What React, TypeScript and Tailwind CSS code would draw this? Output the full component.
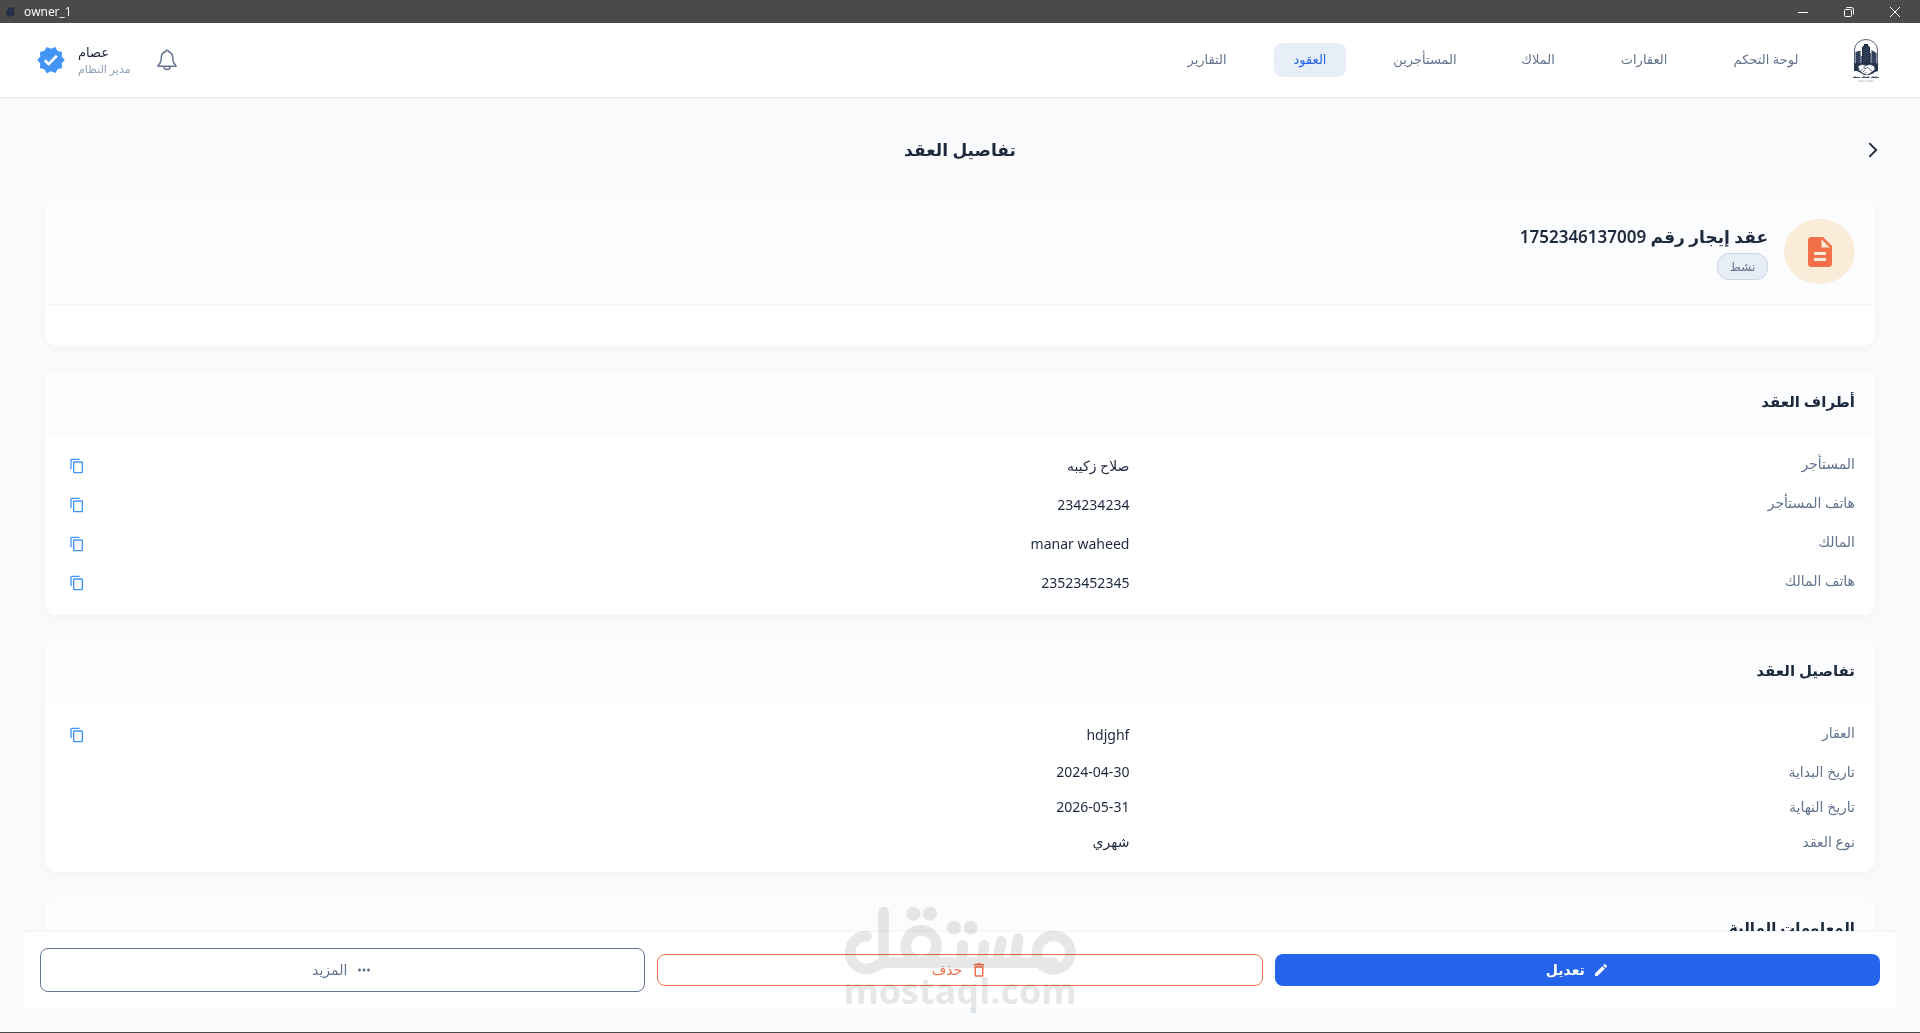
import React from "react";
import {
  MdContentCopy,
  MdDeleteOutline,
  MdDescription,
  MdEdit,
  MdMoreHoriz,
  MdVerified,
  MdArrowForwardIos,
} from "react-icons/md";

type NavItem = { label: string; width: string; active?: boolean };
type Row = { label: string; value: string; copy?: boolean };

const NAV: NavItem[] = [
  { label: "لوحة التحكم", width: "w-[100px]" },
  { label: "العقارات", width: "w-20" },
  { label: "الملاك", width: "w-[68px]" },
  { label: "المستأجرين", width: "w-[94px]" },
  { label: "العقود", width: "w-[72px]", active: true },
  { label: "التقارير", width: "w-[70px]" },
];

const PARTIES: Row[] = [
  { label: "المستأجر", value: "صلاح زكيبه", copy: true },
  { label: "هاتف المستأجر", value: "234234234", copy: true },
  { label: "المالك", value: "manar waheed", copy: true },
  { label: "هاتف المالك", value: "23523452345", copy: true },
];

const DETAILS: Row[] = [
  { label: "العقار", value: "hdjghf", copy: true },
  { label: "تاريخ البداية", value: "2024-04-30" },
  { label: "تاريخ النهاية", value: "2026-05-31" },
  { label: "نوع العقد", value: "شهري" },
];

function AppMark() {
  return (
    <svg viewBox="0 0 10 12" className="h-3 w-[10px]" aria-hidden="true">
      <path d="M1 4l1 0V1l1 1 1-1 1 1 1-1 1 1 1-1v3l1 0-1 2 1 2-1 2-1-1-1 2-1-1-2 1-1-2-1 1-1-3 1-2z" fill="#1f2a44" />
      <path d="M3 6h1M5 3v2M7 6h1M4 9h2" stroke="#4c5a78" strokeWidth=".7" />
    </svg>
  );
}

function TitleBar() {
  return (
    <div dir="ltr" className="flex h-[23px] shrink-0 items-center justify-between bg-[#4c4a48] pr-0.5 text-white">
      <div className="flex items-center gap-2 pl-1.5">
        <AppMark />
        <span className="font-['Open_Sans',sans-serif] text-xs leading-4">owner_1</span>
      </div>
      <div className="flex h-full">
        <button aria-label="Minimize" className="flex w-[46px] items-center justify-center">
          <svg viewBox="0 0 10 10" className="size-[10px]" stroke="currentColor" fill="none">
            <path d="M0 5.5h10" />
          </svg>
        </button>
        <button aria-label="Restore" className="flex w-[46px] items-center justify-center">
          <svg viewBox="0 0 10 10" className="size-[10px]" stroke="currentColor" fill="none">
            <rect x=".5" y="2.5" width="7" height="7" rx="1" />
            <path d="M2.5.5H7.500a2 2 0 0 1 2 2V7.500" />
          </svg>
        </button>
        <button aria-label="Close" className="flex w-[46px] items-center justify-center">
          <svg viewBox="0 0 10 10" className="size-[10px]" stroke="currentColor" fill="none">
            <path d="M0 0l10 10M10 0L0 10" />
          </svg>
        </button>
      </div>
    </div>
  );
}

function Logo() {
  return (
    <svg viewBox="0 0 28 44" className="h-11 w-7" role="img" aria-label="مكتب عصام القت">
      <path d="M2.500 26V12a11.500 10.500 0 0 1 23 0v14" fill="none" stroke="#55627a" strokeWidth="1" />
      <path d="M10 9l2-1.500V6h4v1.500L18 9v18h-8z" fill="#1d2a44" />
      <path d="M3.500 14l5-1.500V26h-5zM19.500 12l5 3v11h-5z" fill="#26334d" />
      <path d="M8.500 18h1.500v8H8.500zM18 15h1.500v11H18z" fill="#5d6a82" />
      <path
        d="M12 9v16M14 8v16M16 9v16M5 15v9M7 14v11M21 14v11M23 15v9"
        stroke="#8e9ab0"
        strokeWidth=".6"
        strokeDasharray="1 1"
      />
      <path d="M2 25l4 1 4-1.500 4 1 4-1 4 1.500 4-1v8l-3 1-3 2-4 1h-4l-4-2.500-3-1.500-3 0z" fill="#26334d" />
      <path
        d="M6 28l4-1.500 4 1 4-1 4 1.500 1 3.500-5 4-3 1.500-4-1.500-4-3.500z"
        fill="#fff"
        stroke="#26334d"
        strokeWidth=".5"
      />
      <path
        d="M14 27.500l-2.500 2.500 1.500.8 2.500-1.300 4.500 3.500M9 32.500l2-1.500M11 34l2-2M13 35.500l1.500-1.500"
        fill="none"
        stroke="#26334d"
        strokeWidth=".7"
      />
      <path d="M1 39.500h7M9.500 39.500h8M19 39.500h8M3 38v1M12 37.800v1.500M16 38v2M21 38v1M24 37.800v2" stroke="#46536b" strokeWidth="1" />
      <path d="M6 43h7M14.500 43h7" stroke="#b6c0cf" strokeWidth="1" />
    </svg>
  );
}

function Header() {
  return (
    <header className="flex h-[75px] shrink-0 items-center justify-between border-b border-[#e5e8ec] bg-white pr-10 pl-9">
      <div className="flex items-center gap-9">
        <Logo />
        <nav className="flex items-center gap-8">
          {NAV.map((item) => (
            <a
              key={item.label}
              href="#"
              className={`flex h-[34px] items-center justify-center rounded-lg text-[13px] whitespace-nowrap ${item.width} ${
                item.active ? "bg-[#e8eef8] font-medium text-[#2563eb]" : "text-slate-500"
              }`}
            >
              {item.label}
            </a>
          ))}
        </nav>
      </div>
      <div dir="ltr" className="flex items-center">
        <MdVerified className="size-[30px] text-[#4294f7]" />
        <div className="ml-3 flex flex-col items-start" dir="ltr">
          <span className="text-[13px] leading-[18px] text-slate-800">عصام</span>
          <span className="text-[11px] leading-4 text-slate-400">مدير النظام</span>
        </div>
        <button aria-label="الإشعارات" className="ml-6 text-slate-500">
          <svg viewBox="0 0 24 24" className="size-6" fill="none" stroke="currentColor" strokeWidth="1.500" strokeLinejoin="round">
            <path d="M10.500 3.800a1.500 1.500 0 0 1 3 0c2.700.7 4.200 3 4.200 5.700 0 4.500 1 6.300 3.300 8v.8H3v-.8c2.300-1.700 3.300-3.500 3.300-8 0-2.700 1.500-5 4.200-5.700z" />
            <path d="M9 18.500a3 3 0 0 0 6 0" />
          </svg>
        </button>
      </div>
    </header>
  );
}

function InfoRow({ row }: { row: Row }) {
  return (
    <div
      className={`mb-2 grid grid-cols-[2fr_3fr] gap-4 text-sm ${row.copy ? "h-[31px]" : "h-[27px]"}`}
    >
      <dt className="leading-7 text-slate-500">{row.label}</dt>
      <dd className="flex items-center justify-between text-slate-800">
        <span>{row.value}</span>
        {row.copy && (
          <button aria-label={`نسخ ${row.label}`} className="p-1 text-[#4294f7]">
            <MdContentCopy className="size-4" />
          </button>
        )}
      </dd>
    </div>
  );
}

function Card({ children }: { children: React.ReactNode }) {
  return (
    <section className="shrink-0 overflow-hidden rounded-xl bg-white shadow-[0_3px_12px_rgba(15,23,42,0.03)]">
      {children}
    </section>
  );
}

function InfoCard({ title, rows }: { title: string; rows: Row[] }) {
  return (
    <Card>
      <h2 className="flex h-16 items-center border-b border-[#f5f7fa] bg-[#fbfcfe] px-5 text-[15px] font-bold text-slate-800">
        {title}
      </h2>
      <dl className="px-5 pt-4 pb-[9px]">
        {rows.map((row) => (
          <InfoRow key={row.label} row={row} />
        ))}
      </dl>
    </Card>
  );
}

function Watermark() {
  return (
    <div
      dir="ltr"
      className="pointer-events-none absolute bottom-[25px] left-1/2 flex w-[232px] -translate-x-1/2 flex-col items-center text-[#e6e7e7] mix-blend-multiply"
    >
      <svg viewBox="74 46 692 206" className="w-full" fill="none" stroke="currentColor" strokeWidth="32" strokeLinecap="round" aria-hidden="true">
        <path d="M141 136a49 49 0 1 0 0 98c27 0 32-19 56-19H699M192 64V212" />
        <circle cx="304" cy="165" r="46" />
        <circle cx="699" cy="185" r="50" />
        <path d="M428 163L424 212M492 163L485 212M543 151L532 212M593 143L584 212" />
        <g fill="currentColor" stroke="none">
          <circle cx="281" cy="69" r="21" />
          <circle cx="330" cy="69" r="21" />
          <circle cx="402" cy="111" r="21" />
          <circle cx="452" cy="111" r="21" />
        </g>
      </svg>
      <span className="font-['Open_Sans',sans-serif] text-4xl leading-8 font-bold">mostaql.com</span>
    </div>
  );
}

function ActionBar() {
  return (
    <footer className="grid shrink-0 grid-cols-3 items-center gap-3 border-t border-[#f1f3f6] bg-white p-4 text-sm">
      <button className="flex h-8 items-center justify-center gap-2 rounded-lg bg-[#2563eb] font-semibold text-white">
        <MdEdit className="size-4" />
        تعديل
      </button>
      <button className="flex h-8 items-center justify-center gap-2 rounded-lg border border-[#f1704a] font-medium text-[#f1704a]">
        <MdDeleteOutline className="size-[18px]" />
        حذف
      </button>
      <button className="flex h-11 items-center justify-center gap-2 rounded-lg border border-slate-500 font-medium text-slate-500">
        <MdMoreHoriz className="size-[18px]" />
        المزيد
      </button>
    </footer>
  );
}

export default function App() {
  return (
    <div
      dir="rtl"
      className="relative flex h-screen flex-col overflow-hidden border-b border-[#4c4a48] bg-slate-50 font-['Noto_Sans','DejaVu_Sans',sans-serif]"
    >
      <TitleBar />
      <Header />
      <main className="flex min-h-0 flex-1 flex-col p-6">
        <div className="grid h-14 shrink-0 grid-cols-[1fr_auto_1fr] items-center bg-[#fafbfd] px-3.5">
          <button aria-label="رجوع" className="justify-self-start text-slate-800">
            <MdArrowForwardIos className="size-[18px]" />
          </button>
          <h1 className="text-[17px] font-bold text-slate-800">تفاصيل العقد</h1>
        </div>
        <div className="flex min-h-0 flex-1 flex-col gap-6 overflow-hidden px-[21px] pt-[21px]">
          <Card>
            <div className="flex gap-4 border-b border-[#f5f7fa] bg-[#fbfcfe] p-5">
              <div className="flex h-[65px] w-[71px] items-center justify-center rounded-[50%] bg-[#fbecd9] text-[#f1704a]">
                <MdDescription className="size-9" />
              </div>
              <div className="flex flex-col items-start pt-1">
                <h2 className="text-[17px] leading-7 font-semibold text-slate-800">عقد إيجار رقم 1752346137009</h2>
                <span className="mt-0.5 flex h-[27px] w-[51px] items-center justify-center rounded-xl border border-[#cbd5e4] bg-[#e8eef8] text-xs font-medium text-slate-500">
                  نشط
                </span>
              </div>
            </div>
            <div className="h-[41px]" />
          </Card>
          <InfoCard title="أطراف العقد" rows={PARTIES} />
          <InfoCard title="تفاصيل العقد" rows={DETAILS} />
          <InfoCard title="المعلومات المالية" rows={[]} />
        </div>
        <ActionBar />
      </main>
      <Watermark />
    </div>
  );
}
